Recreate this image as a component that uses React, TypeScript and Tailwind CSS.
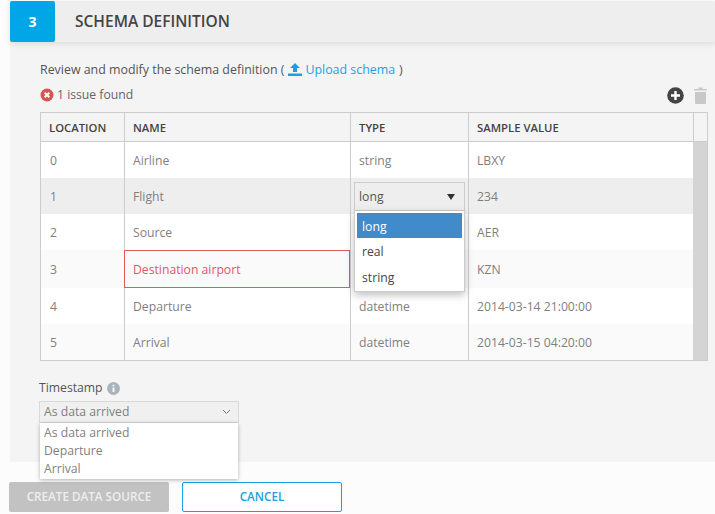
import React from "react";

const rows = [
  { loc: "0", name: "Airline", type: "string", sample: "LBXY", h: "h-[36px]", bg: "bg-white" },
  { loc: "1", name: "Flight", type: "", sample: "234", h: "h-[36px]", bg: "bg-[#eeeeee]" },
  { loc: "2", name: "Source", type: "", sample: "AER", h: "h-[36px]", bg: "bg-white" },
  { loc: "3", name: "Destination airport", type: "", sample: "KZN", h: "h-[38px]", bg: "bg-[#fafafa]" },
  { loc: "4", name: "Departure", type: "datetime", sample: "2014-03-14 21:00:00", h: "h-[36px]", bg: "bg-white" },
  { loc: "5", name: "Arrival", type: "datetime", sample: "2014-03-15 04:20:00", h: "h-[36px]", bg: "bg-[#fafafa]" },
];

export default function App() {
  return (
    <div className="w-[715px] h-[514px] overflow-hidden bg-[#fcfcfc] pl-[10px] pt-px font-['Open_Sans',sans-serif] text-[12.2px] text-[#7f7f7f]">
      <div className="relative flex h-[41px] items-stretch bg-[#eeeeee] shadow-[0_2px_6px_rgba(0,0,0,0.1)]">
        <div className="flex w-[45px] items-center justify-center rounded-[2px] bg-[#00a6e6] text-[14px] font-bold text-white">3</div>
        <div className="ml-[20px] flex items-center pt-px text-[15.5px] font-semibold text-[#444444]">SCHEMA DEFINITION</div>
      </div>
      <div className="h-[420px] bg-[#f4f4f4] pl-[30px] pr-[7px]">
        <div className="flex h-[40px] items-end pb-[3px] text-[12.4px] leading-[18px] text-[#555555]">
          Review and modify the schema definition (
          <svg className="ml-[4px] mr-[3px] mb-[3px]" width="14" height="13" viewBox="0 0 14 13">
            <path fill="#1ba1e2" d="M7 0 L12 5 H9 V9 H5 V5 H2 Z M0 10.5 H14 V13 H0 Z" />
          </svg>
          <span className="text-[#1ba1e2]">Upload schema</span>
          <span className="ml-[4px]">)</span>
        </div>
        <div className="flex h-[26px] items-center justify-between pr-[1px] text-[#666666]">
          <div className="flex items-center gap-[3px]">
            <svg width="14" height="14" viewBox="0 0 14 14">
              <circle cx="7" cy="7" r="6.5" fill="#d9534f" />
              <path d="M4.7 4.7 L9.3 9.3 M9.3 4.7 L4.7 9.3" stroke="#fff" strokeWidth="2" />
            </svg>
            <span>1 issue found</span>
          </div>
          <div className="flex items-center gap-[10px]">
            <svg width="17" height="17" viewBox="0 0 17 17">
              <circle cx="8.5" cy="8.5" r="8.3" fill="#444444" />
              <path d="M8.5 4 V13 M4 8.5 H13" stroke="#fff" strokeWidth="2.4" />
            </svg>
            <svg width="13" height="17" viewBox="0 0 13 17">
              <path fill="#c8c8c8" d="M1 5 H12 V16 Q12 17 11 17 H2 Q1 17 1 16 Z M0 2 H4.5 V0.5 H8.5 V2 H13 V3.5 H0 Z" />
            </svg>
          </div>
        </div>
        <div className="relative mt-[4px] w-[668px] border border-[#cccccc]">
          <div className="flex h-[29px] border-b border-[#cccccc] bg-[#f4f4f4] text-[11.3px] font-semibold text-[#444444]">
            <div className="flex w-[84px] items-center border-r border-[#cccccc] pl-[8px] pt-[2px]">LOCATION</div>
            <div className="flex w-[226px] items-center border-r border-[#cccccc] pl-[8px] pt-[2px]">NAME</div>
            <div className="flex w-[118px] items-center border-r border-[#cccccc] pl-[8px] pt-[2px]">TYPE</div>
            <div className="flex w-[225px] items-center border-r border-[#cccccc] pl-[8px] pt-[2px]">SAMPLE VALUE</div>
          </div>
          <div className="flex">
            <div className="w-[652px]">
              {rows.map((r) => {
                const bad = r.loc === "3";
                return (
                  <div key={r.loc} className={`flex ${r.h} ${r.bg}`}>
                    <div className="flex w-[84px] items-center border-r border-[#cccccc] pl-[9px] pt-[2px]">{r.loc}</div>
                    <div
                      className={
                        bad
                          ? "-ml-px flex w-[226px] items-center border border-[#e05a5f] pl-[8px] pt-[2px] text-[#e0566b]"
                          : "flex w-[226px] items-center border-r border-[#cccccc] pl-[8px] pt-[2px]"
                      }
                    >
                      {r.name}
                    </div>
                    <div
                      className={
                        bad
                          ? "flex w-[119px] items-center border-x border-[#cccccc] pl-[8px]"
                          : "relative flex w-[118px] items-center border-r border-[#cccccc] pl-[8px] pt-[2px]"
                      }
                    >
                      {r.type}
                      {r.loc === "1" && (
                        <div className="absolute left-[3px] top-[4px] z-10 w-[111px]">
                          <div className="flex h-[29px] items-center justify-between border border-[#cccccc] bg-[#eeeeee] pl-[4px] pr-[9px] pt-[2px] text-[#555555]">
                            long
                            <svg className="mb-[2px]" width="8" height="6" viewBox="0 0 8 6"><path fill="#333" d="M0 0 H8 L4 6 Z" /></svg>
                          </div>
                          <div className="border border-t-0 border-[#cccccc] bg-white px-[2px] pt-[2px] pb-[1px] text-[#444444] shadow-[0_3px_8px_rgba(0,0,0,0.25)]">
                            <div className="flex h-[25px] items-center bg-[#428bca] pl-[5px] pt-[3px] text-white">long</div>
                            <div className="flex h-[26px] items-center pl-[5px] pt-[2px]">real</div>
                            <div className="flex h-[26px] items-center pl-[5px] pt-[2px]">string</div>
                          </div>
                        </div>
                      )}
                    </div>
                    <div className="flex w-[224px] items-center pl-[8px] pt-[2px]">{r.sample}</div>
                  </div>
                );
              })}
            </div>
            <div className="w-[14px] bg-[#d4d4d4]" />
          </div>
        </div>
        <div className="mt-[18px] flex items-center gap-[4px] text-[#555555]">
          <span className="ml-[-1px]">Timestamp</span>
          <svg width="13" height="13" viewBox="0 0 13 13">
            <circle cx="6.5" cy="6.5" r="6.5" fill="#a9b4bd" />
            <path d="M6.5 5.5 V10 M6.5 2.8 V4.3" stroke="#fff" strokeWidth="1.8" />
          </svg>
        </div>
        <div className="relative ml-[-1px] mt-[4px] w-[200px]">
          <div className="flex h-[22px] items-center justify-between border border-[#d9d9d9] bg-[#f0f0f0] pl-[4px] pr-[7px]">
            As data arrived
            <svg width="9" height="6" viewBox="0 0 9 6" fill="none"><path d="M1 1 L4.5 4.5 L8 1" stroke="#777" strokeWidth="1" /></svg>
          </div>
          <div className="absolute left-px top-[22px] z-10 w-[198px] bg-white px-[4px] py-px leading-[18px] shadow-[0_1px_4px_rgba(0,0,0,0.3)]">
            <div>As data arrived</div>
            <div>Departure</div>
            <div>Arrival</div>
          </div>
        </div>
      </div>
      <div className="-ml-px mt-[20px] flex gap-[13px] text-[11.7px] font-semibold">
        <div className="flex h-[30px] w-[160px] items-center justify-center rounded-[2px] bg-[#c2c2c2] text-[#eeeeee]">CREATE DATA SOURCE</div>
        <div className="flex h-[30px] w-[160px] items-center justify-center rounded-[2px] border border-[#1ba1e2] bg-white text-[#1ba1e2]">CANCEL</div>
      </div>
    </div>
  );
}
